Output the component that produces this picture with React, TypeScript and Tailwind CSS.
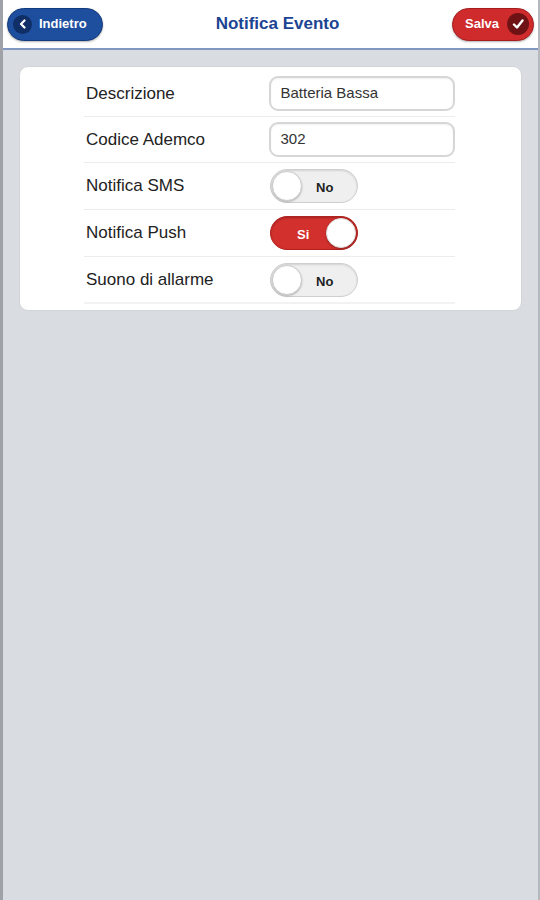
function Toggle({ on }: { on: boolean }) {
  if (on) {
    return (
      <div className="relative w-[88px] h-[34px] rounded-full bg-[#d2302c] border border-[#b3221f] shadow-[inset_0_1px_2px_rgba(0,0,0,0.25)]">
        <span className="absolute left-[26px] top-[8px] text-[13px] font-bold text-white">Si</span>
        <span className="absolute right-[1px] top-[1px] w-[30px] h-[30px] rounded-full bg-white border border-[#ddd] shadow-[0_1px_2px_rgba(0,0,0,0.3)]" />
      </div>
    );
  }
  return (
    <div className="relative w-[88px] h-[34px] rounded-full bg-[#efefef] border border-[#cfcfcf] shadow-[inset_0_1px_2px_rgba(0,0,0,0.12)]">
      <span className="absolute left-[45px] top-[8px] text-[13px] font-bold text-[#222]">No</span>
      <span className="absolute left-[1px] top-[1px] w-[30px] h-[30px] rounded-full bg-white border border-[#ccc] shadow-[0_1px_2px_rgba(0,0,0,0.25)]" />
    </div>
  );
}

function Row({ label, children, tall, last }: { label: string; children: React.ReactNode; tall?: boolean; last?: boolean }) {
  return (
    <div className={`flex items-center ${tall ? "h-[47px]" : "h-[46px]"} ${last ? "border-b-2 border-[#f2f2f2]" : "border-b border-[#ececec]"}`}>
      <div className="w-[186px] pl-[2px] text-[17px] text-[#222]">{label}</div>
      {children}
    </div>
  );
}

function Field({ value }: { value: string }) {
  return (
    <div className="w-[186px] h-[35px] rounded-[9px] border-2 border-[#d6d6d6] bg-white px-[9px] flex items-center text-[15px] text-[#333] shadow-[inset_0_1px_2px_rgba(0,0,0,0.06)]">
      {value}
    </div>
  );
}

export default function App() {
  return (
    <div className="w-[540px] h-[900px] bg-[#d9dde1] border-l-[3px] border-l-[#9fa3a8] border-r-2 border-r-[#b5b8bc] flex flex-col" style={{ fontFamily: '"Liberation Sans", Arial, sans-serif' }}>
      <header className="h-[50px] bg-white border-b-2 border-[#8296c2] flex items-center justify-between pl-[4px] pr-[4px]">
        <button className="h-[33px] w-[96px] rounded-full bg-[#1e4e9e] border border-[#123a7c] flex items-center gap-[7px] pl-[5px] shadow-[0_1px_2px_rgba(0,0,0,0.3)]">
          <span className="w-[19px] h-[19px] rounded-full bg-[#0f2f66] flex items-center justify-center">
            <svg width="10" height="10" viewBox="0 0 10 10">
              <path d="M6.5 1.5 L3 5 L6.5 8.5" fill="none" stroke="white" strokeWidth="2.2" strokeLinecap="round" strokeLinejoin="round" />
            </svg>
          </span>
          <span className="text-white text-[13px] font-bold">Indietro</span>
        </button>
        <h1 className="text-[17px] font-bold text-[#1b4492]">Notifica Evento</h1>
        <button className="h-[33px] w-[82px] rounded-full bg-[#cf2a2c] border border-[#a51c1f] flex items-center justify-end gap-[8px] pr-[4px] shadow-[0_1px_2px_rgba(0,0,0,0.3)]">
          <span className="text-white text-[13px] font-bold">Salva</span>
          <span className="w-[22px] h-[22px] rounded-full bg-[#6e1216] flex items-center justify-center">
            <svg width="12" height="12" viewBox="0 0 12 12">
              <path d="M2 6.5 L5 9.5 L10.5 2.5" fill="none" stroke="white" strokeWidth="2.4" strokeLinecap="round" strokeLinejoin="round" />
            </svg>
          </span>
        </button>
      </header>
      <main className="px-[16px] pt-[16px]">
        <div className="bg-white rounded-[9px] border border-[#d2d5d8] pl-[64px] pr-[66px] pt-[4px] pb-[6px]">
          <Row label="Descrizione"><Field value="Batteria Bassa" /></Row>
          <Row label="Codice Ademco"><Field value="302" /></Row>
          <Row label="Notifica SMS" tall><Toggle on={false} /></Row>
          <Row label="Notifica Push" tall><Toggle on={true} /></Row>
          <Row label="Suono di allarme" tall last><Toggle on={false} /></Row>
        </div>
      </main>
    </div>
  );
}
